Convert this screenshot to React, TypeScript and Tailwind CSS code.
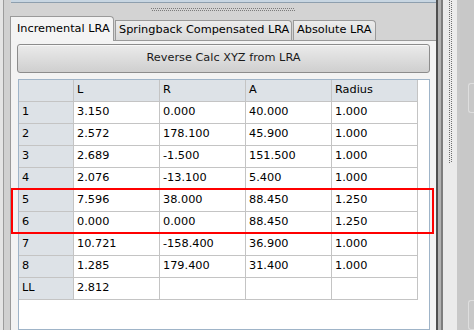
const rows = [
  { id: '1', l: '3.150', r: '0.000', a: '40.000', radius: '1.000' },
  { id: '2', l: '2.572', r: '178.100', a: '45.900', radius: '1.000' },
  { id: '3', l: '2.689', r: '-1.500', a: '151.500', radius: '1.000' },
  { id: '4', l: '2.076', r: '-13.100', a: '5.400', radius: '1.000' },
  { id: '5', l: '7.596', r: '38.000', a: '88.450', radius: '1.250' },
  { id: '6', l: '0.000', r: '0.000', a: '88.450', radius: '1.250' },
  { id: '7', l: '10.721', r: '-158.400', a: '36.900', radius: '1.000' },
  { id: '8', l: '1.285', r: '179.400', a: '31.400', radius: '1.000' },
  { id: 'LL', l: '2.812', r: '', a: '', radius: '' }
];

const headers = ['L', 'R', 'A', 'Radius'];

const DotsH = () => (
  <div className="flex w-[144px] flex-col gap-px">
    <div className="h-px w-full bg-[repeating-linear-gradient(to_right,#7a7a7a_0,#7a7a7a_1px,transparent_1px,transparent_2px)]" />
    <div className="h-px w-full bg-[repeating-linear-gradient(to_right,transparent_0,transparent_1px,#7a7a7a_1px,#7a7a7a_2px)]" />
  </div>
);

const DotsV = () => (
  <div className="flex h-[163px] gap-px">
    <div className="h-full w-px bg-[repeating-linear-gradient(to_bottom,#6e6e6e_0,#6e6e6e_1px,transparent_1px,transparent_2px)]" />
    <div className="h-full w-px bg-[repeating-linear-gradient(to_bottom,transparent_0,transparent_1px,#6e6e6e_1px,#6e6e6e_2px)]" />
  </div>
);

const Cell = ({ children, head }: { children?: string; head?: boolean }) => (
  <div
    className={`flex h-[22px] w-[86px] shrink-0 items-center border-r border-b border-[#c4c4c4] pl-[3px] ${
      head ? 'bg-[#dde2e7]' : 'bg-white'
    }`}
  >
    {children}
  </div>
);

const RowHead = ({ children }: { children?: string }) => (
  <div className="flex h-[22px] w-[55px] shrink-0 items-center border-r border-b border-[#c4c4c4] bg-[#dde2e7] pl-[3px]">
    {children}
  </div>
);

export default function App() {
  return (
    <div className="relative flex h-[330px] w-[474px] overflow-hidden bg-[#d3d3d3] font-['DejaVu_Sans',sans-serif] text-[11.3px] text-black">
      {/* left frame */}
      <div className="flex h-full shrink-0">
        <div className="h-full w-[3px] bg-[#e4e4e4]" />
        <div className="h-full w-px bg-[#9c9c9c]" />
        <div className="h-full w-[6px] bg-[#d0d0d0]" />
      </div>

      {/* tab widget */}
      <div className="flex h-full w-[426px] shrink-0 flex-col">
        <div className="flex h-[16px] shrink-0 flex-col">
          <div className="ml-px h-[3px] border-b border-[#8e9fae] bg-[#c8d6e2]" />
          <div className="flex flex-1 items-center justify-center pb-px">
            <DotsH />
          </div>
        </div>

        <div className="flex h-[24px] shrink-0 items-end whitespace-nowrap">
          <div className="relative z-10 -mb-px flex h-[25px] w-[104px] items-center rounded-tr-[4px] border border-b-0 border-[#9a9a9a] bg-[#f4f4f4] pl-[6px]">
            Incremental LRA
          </div>
          <div className="ml-px flex h-[20px] w-[177px] items-center rounded-tr-[4px] border border-b-0 border-[#9a9a9a] bg-gradient-to-b from-[#ececec] to-[#d9d9d9] pl-[3px]">
            Springback Compensated LRA
          </div>
          <div className="ml-px flex h-[20px] w-[83px] items-center rounded-tr-[4px] border border-b-0 border-[#9a9a9a] bg-gradient-to-b from-[#ececec] to-[#d9d9d9] pl-[3px]">
            Absolute LRA
          </div>
        </div>

        <div className="flex flex-1 flex-col overflow-hidden border-t border-l border-[#9a9a9a] bg-[#f3f3f3] pt-[3px] pr-[6px] pl-[6px]">
          <button className="flex h-[29px] w-[413px] shrink-0 items-center justify-center rounded-[3px] border border-[#8c8c8c] bg-gradient-to-b from-[#ebebeb] to-[#cfcfcf] text-[11.3px] text-[#1a1a1a] shadow-[inset_0_1px_0_#f8f8f8]">
            Reverse Calc XYZ from LRA
          </button>

          <div className="mt-[6px] ml-px flex w-[412px] flex-1 flex-col border border-[#9fb4c8] bg-white">
            <div className="flex">
              <RowHead />
              {headers.map((h) => (
                <Cell key={h} head>
                  {h}
                </Cell>
              ))}
            </div>
            {rows.map((row) => (
              <div key={row.id} className="flex">
                <RowHead>{row.id}</RowHead>
                <Cell>{row.l}</Cell>
                <Cell>{row.r}</Cell>
                <Cell>{row.a}</Cell>
                <Cell>{row.radius}</Cell>
              </div>
            ))}
          </div>
        </div>
      </div>

      {/* right splitter + panel */}
      <div className="flex h-full flex-1">
        <div className="h-full w-[2px] bg-[#4f4f4f]" />
        <div className="h-full w-[3px] bg-[#b2b2b2]" />
        <div className="h-full w-[2px] bg-[#7e7e7e]" />
        <div className="h-full w-[14px] bg-[#ebebeb] pl-[6px]">
          <DotsV />
        </div>
        <div className="flex h-full flex-1 flex-col bg-[#c8c8c8] pt-[83px] pl-[11px]">
          <div className="h-[40px] w-full rounded-l-[3px] border border-r-0 border-[#dedede]" />
          <div className="mt-[187px] h-[40px] w-full rounded-l-[3px] border border-r-0 border-[#dedede]" />
        </div>
      </div>

      {/* highlight box */}
      <div className="pointer-events-none absolute top-[188px] left-[11px] h-[46px] w-[423px] border-2 border-[#ff0000]" />
    </div>
  );
}
